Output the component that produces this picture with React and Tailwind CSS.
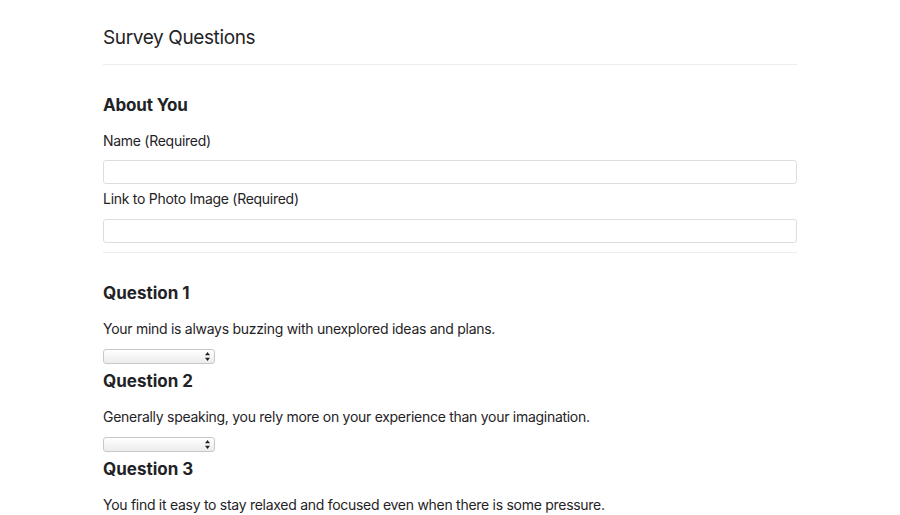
import React from "react";

const questions = [
    "Your mind is always buzzing with unexplored ideas and plans.",
    "Generally speaking, you rely more on your experience than your imagination.",
    "You find it easy to stay relaxed and focused even when there is some pressure.",
];

function SmallSelect() {
    return (
        <div className="relative w-[112px] h-[15px]">
            <select className="appearance-none block w-full h-[15px] min-h-0 p-0 rounded-[3px] border border-[#c8c8c8] bg-gradient-to-b from-white to-[#ececec] text-[10px] leading-[13px] outline-none">
                <option></option>
                <option>Strongly Agree</option>
                <option>Agree</option>
                <option>Neutral</option>
                <option>Disagree</option>
                <option>Strongly Disagree</option>
            </select>
            <svg
                className="absolute right-[5px] top-[3px] pointer-events-none"
                width="5"
                height="9"
                viewBox="0 0 5 9"
            >
                <path d="M2.5 0 L5 3.3 L0 3.3 Z" fill="#222" />
                <path d="M2.5 9 L5 5.7 L0 5.7 Z" fill="#222" />
            </svg>
        </div>
    );
}

export default function App() {
    return (
        <div className="min-h-screen overflow-hidden bg-white text-[#1f2326] font-['Inter','Liberation_Sans',sans-serif]">
            <div className="w-[694px] ml-[103px] pt-[26px]">
                <h1 className="text-[19px] leading-[24px] font-normal tracking-[-0.02em]">Survey Questions</h1>
                <hr className="mt-[14px] border-t border-[#ececec]" />

                <h2 className="mt-[29px] text-[17px] leading-[22px] font-bold tracking-[-0.01em]">About You</h2>
                <label className="block mt-[15px] text-[14px] leading-[20px] tracking-[-0.02em]">
                    Name (Required)
                </label>
                <input
                    type="text"
                    className="block mt-[9px] w-full h-[24px] rounded-[3px] border border-[#dedede] outline-none"
                />
                <label className="block mt-[5px] text-[14px] leading-[20px] tracking-[-0.02em]">
                    Link to Photo Image (Required)
                </label>
                <input
                    type="text"
                    className="block mt-[10px] w-full h-[24px] rounded-[3px] border border-[#dedede] outline-none"
                />
                <hr className="mt-[9px] border-t border-[#ececec]" />

                <div className="mt-[29px]">
                    {questions.map((q, i) => (
                        <div key={i} className="h-[88px]">
                            <h3 className="text-[17px] leading-[22px] font-bold">Question {i + 1}</h3>
                            <p className="mt-[15px] text-[14px] leading-[20px] tracking-[-0.02em]">{q}</p>
                            <div className="mt-[10px]">
                                <SmallSelect />
                            </div>
                        </div>
                    ))}
                </div>
            </div>
        </div>
    );
}
